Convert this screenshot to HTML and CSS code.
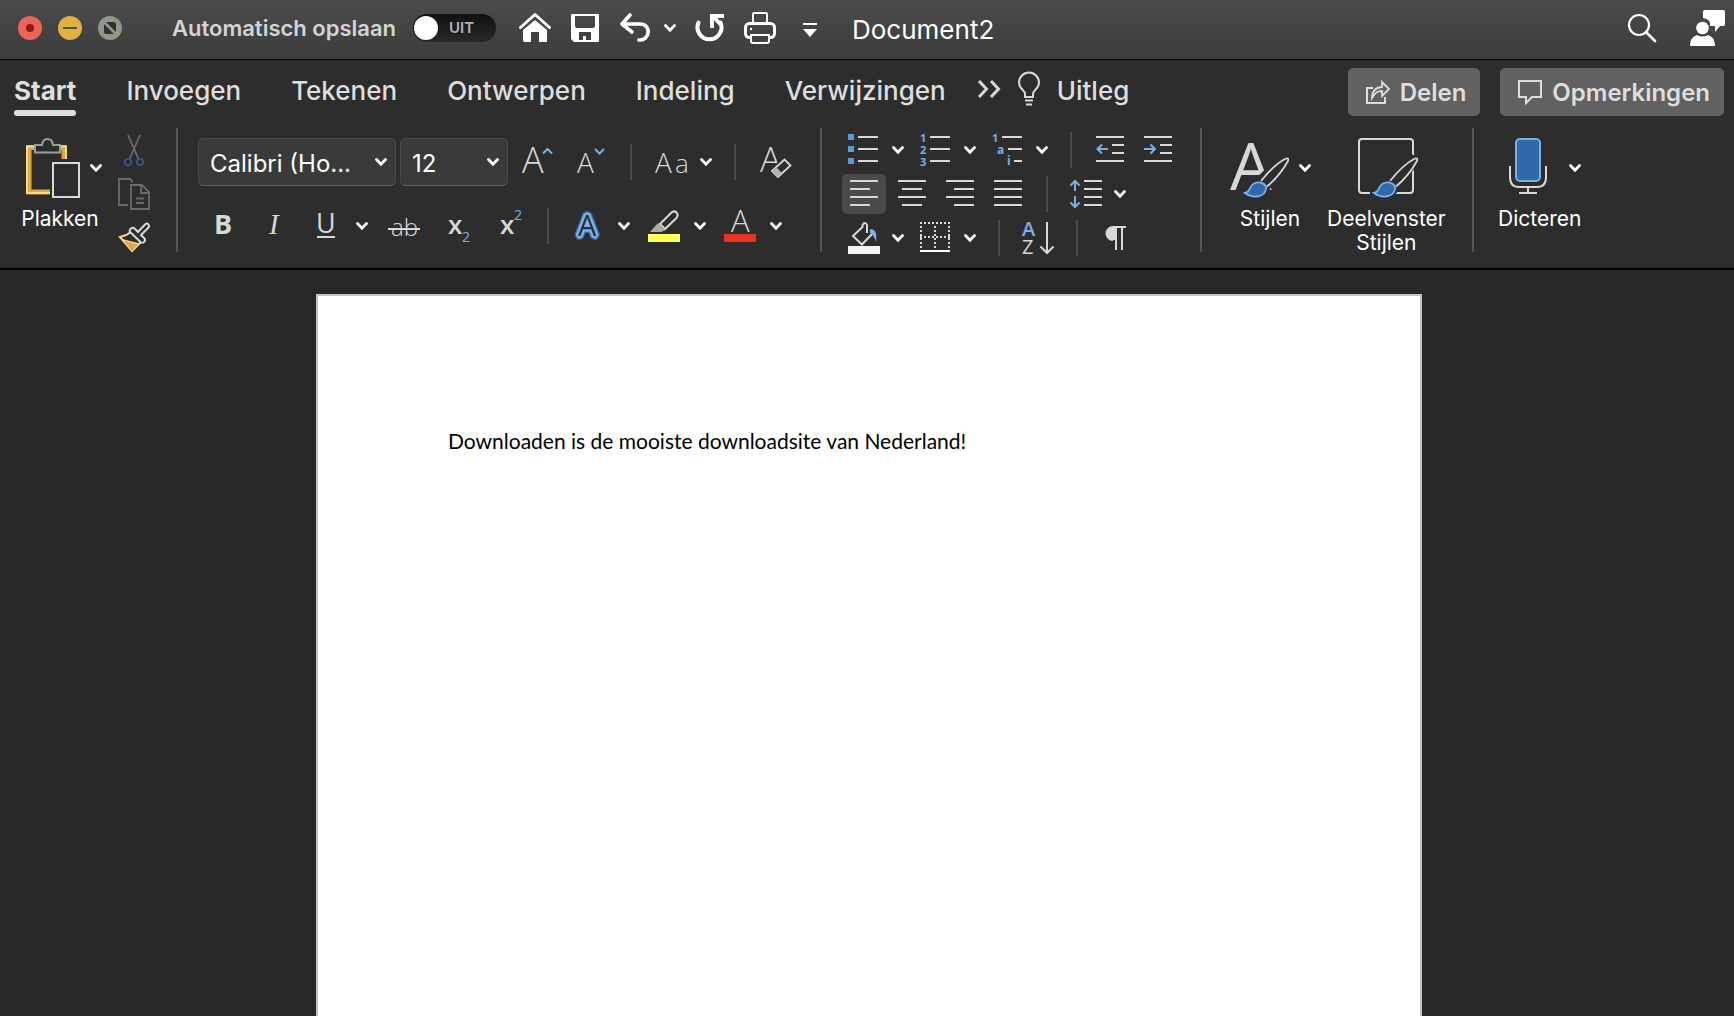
FILE: index.html
```html
<!DOCTYPE html>
<html lang="nl">
<head>
<meta charset="utf-8">
<title>Document2</title>
<meta name="viewport" content="width=device-width, initial-scale=1">
<link rel="stylesheet" href="styles.css">
</head>
<body>
<svg class="defs" aria-hidden="true">
  <symbol id="chev" viewBox="0 0 12 8"><path d="M1.5 1.5 6 6.2 10.5 1.5" fill="none" stroke="currentColor" stroke-width="2.8" stroke-linecap="round"/></symbol>
  <symbol id="brush" viewBox="0 0 60 60">
    <path d="M30 47 58 20" stroke="#2d2d2d" stroke-width="14" fill="none"/>
    <path d="M12 54C20 54 20 42 30 41L42 48C40 58 30 64 12 58Z" fill="#2d2d2d"/>
    <path d="M32 43C40 33 50 24 57 20.5Q60 19.5 59 23C54 32 47 41 38 48.5" fill="none" stroke="#d8d8d8" stroke-width="1.8"/>
    <path d="M16 55C22 54 20 47 26 45C31 43 38 46 37 51C36 59 24 61 16 55Z" fill="#2f69ac" stroke="#7ab0e6" stroke-width="1.8"/>
  </symbol>
</svg>

<header class="titlebar">
  <div class="lights">
    <button class="light light-close" aria-label="Sluiten"><svg viewBox="0 0 24 24"><circle cx="12" cy="12" r="4" fill="#8c1a12"/></svg></button>
    <button class="light light-min" aria-label="Minimaliseren"><svg viewBox="0 0 24 24"><path d="M5 12h14" stroke="#5e5236" stroke-width="2"/></svg></button>
    <button class="light light-max" aria-label="Vergroten"><svg viewBox="0 0 24 24"><path d="M8 6h8q2 0 2 2v8ZM6 8v8q0 2 2 2h8Z" fill="#2f332d"/></svg></button>
  </div>
  <div class="autosave">
    <label for="autosave">Automatisch opslaan</label>
    <span class="switch"><input type="checkbox" id="autosave"><span class="switch-text">UIT</span></span>
  </div>
  <div class="quick">
    <button class="icon" aria-label="Start"><svg viewBox="0 0 32 32"><path d="M1.5 15.5 16 2.5 30.5 15.5" fill="none" stroke="#fff" stroke-width="3" stroke-linecap="round" stroke-linejoin="round"/><path d="M4 18 16 8 28 18V30H20V20H12V30H6Q4 30 4 28Z" fill="#fff"/></svg></button>
    <button class="icon" aria-label="Opslaan"><svg viewBox="0 0 32 32"><path fill-rule="evenodd" d="M3 2H29Q30 2 30 3V29Q30 30 29 30H5L2 27V3Q2 2 3 2ZM6 4V14Q6 16 8 16H24Q26 16 26 14V4ZM10 20V28H14V24H17V28H22V20Z" fill="#fff"/></svg></button>
    <span class="split">
      <button class="icon" aria-label="Ongedaan maken"><svg viewBox="0 0 32 32"><path d="M11 3 3 12 13 20M4 12H21C33 12 31 29 20 28" fill="none" stroke="#fff" stroke-width="3.6" stroke-linecap="round" stroke-linejoin="round"/></svg></button>
      <button class="drop" aria-label="Meer"><svg><use href="#chev"/></svg></button>
    </span>
    <button class="icon" aria-label="Opnieuw"><svg viewBox="0 0 32 32"><path d="M4.5 10.5A12 12 0 1 0 26.5 10.5" fill="none" stroke="#fff" stroke-width="4" stroke-linecap="round"/><path d="M18 16V4H30M19 4 27 13" fill="none" stroke="#fff" stroke-width="4"/></svg></button>
    <button class="icon" aria-label="Afdrukken"><svg viewBox="0 0 32 32"><path d="M9 11V2Q9 1 10 1H22Q23 1 23 2V11" fill="none" stroke="#fff" stroke-width="2"/><rect x="1.5" y="11.5" width="29" height="14" rx="4" fill="none" stroke="#fff" stroke-width="3"/><circle cx="7" cy="17" r="1.2" fill="#fff"/><path d="M7 23H25V29Q25 31 23 31H9Q7 31 7 29Z" fill="#424242" stroke="#fff" stroke-width="2"/></svg></button>
    <button class="icon" aria-label="Werkbalk aanpassen"><svg viewBox="0 0 32 32"><path d="M9 12H23" stroke="#fff" stroke-width="2"/><path d="M9 17H23L16 25Z" fill="#fff"/></svg></button>
  </div>
  <h1 class="doc-title">Document2</h1>
  <div class="title-right">
    <button class="icon" aria-label="Zoeken"><svg viewBox="0 0 32 32"><circle cx="13" cy="13" r="10" fill="none" stroke="#fff" stroke-width="2.2"/><path d="M20 20 29 29" stroke="#fff" stroke-width="2.6" stroke-linecap="round"/></svg></button>
    <button class="icon icon-person" aria-label="Account"><svg viewBox="0 0 36 36"><path d="M15 0H33Q35 0 35 2V14Q35 16 33 16H30L25 22V16H20Q21 9 13 8V2Q13 0 15 0Z" fill="#fff"/><circle cx="12.5" cy="18" r="6.3" fill="#fff"/><path d="M0 36Q0 27 7 25Q12 28 18 25Q25 27 25 36Z" fill="#fff"/></svg></button>
  </div>
</header>

<div class="ribbon">
  <nav class="tabs">
    <div class="tab-list">
      <a class="tab tab-active" href="#start">Start</a>
      <a class="tab" href="#invoegen">Invoegen</a>
      <a class="tab" href="#tekenen">Tekenen</a>
      <a class="tab" href="#ontwerpen">Ontwerpen</a>
      <a class="tab" href="#indeling">Indeling</a>
      <a class="tab" href="#verwijzingen">Verwijzingen</a>
    </div>
    <div class="help">
      <button class="more" aria-label="Meer tabbladen"><svg viewBox="0 0 24 20"><path d="M2 2 9.5 10 2 18M14 2 21.5 10 14 18" fill="none" stroke="#d8d8d8" stroke-width="3"/></svg></button>
      <svg class="bulb" viewBox="0 0 24 34"><path d="M8 25V22C8 18 2 17 2 10.5A10 10 0 0 1 22 10.5C22 17 16 18 16 22V25ZM8 28.5H16M9 32.5H15" fill="none" stroke="#d8d8d8" stroke-width="2"/></svg>
      <a class="tab" href="#uitleg">Uitleg</a>
    </div>
    <div class="share">
      <button class="pill"><svg viewBox="0 0 24 24"><path d="M7 8H1V23H19V17" fill="none" stroke="#dedede" stroke-width="2"/><path d="M6 18C6 11 10 7 16 7V2L23 9 16 16V11C11 11 9 13 6 18Z" fill="none" stroke="#dedede" stroke-width="1.8"/></svg>Delen</button>
      <button class="pill"><svg viewBox="0 0 24 24"><path d="M1 1H23V17H14L8 23V17H1Z" fill="none" stroke="#dedede" stroke-width="2"/></svg>Opmerkingen</button>
    </div>
  </nav>

  <div class="groups">
    <section class="group clipboard">
      <div class="big">
        <div class="big-top">
          <button class="big-icon" aria-labelledby="l-paste"><svg viewBox="-7 0 60 60"><path d="M9 9.5H4V54H25M32 9.5H39V21" fill="none" stroke="#dfa83f" stroke-width="5"/><path d="M9 8.5H2V55H25M33 8.5H41V21" fill="none" stroke="#f7d98c" stroke-width="2"/><path d="M10 14.5V7H17C18 -1 27 -1 28 7H35V14.5Z" fill="#2d2d2d" stroke="#98a195" stroke-width="2"/><rect x="28" y="25" width="26" height="34" fill="#2d2d2d" stroke="#d8d8d8" stroke-width="2"/></svg></button>
          <button class="drop" aria-label="Plakopties"><svg><use href="#chev"/></svg></button>
        </div>
        <span class="big-label" id="l-paste">Plakken</span>
      </div>
      <div class="stack">
        <button class="icon" aria-label="Knippen"><svg viewBox="0 0 32 32"><path d="M10 1 20.5 25M22 1 11.5 25" stroke="#6b6b6b" stroke-width="1.8"/><circle cx="10" cy="28" r="3.2" fill="none" stroke="#35567d" stroke-width="1.8"/><circle cx="22" cy="28" r="3.2" fill="none" stroke="#35567d" stroke-width="1.8"/></svg></button>
        <button class="icon" aria-label="Kopiëren"><svg viewBox="0 0 32 32"><path d="M10 27H1V1H12L15 4M13 7H24L31 14V31H13ZM23 7V15H31M18 20.5H26M18 25H26" fill="none" stroke="#6b6b6b" stroke-width="1.8"/></svg></button>
        <button class="icon" aria-label="Opmaak kopiëren"><svg viewBox="0 0 32 32"><path d="M2 15 14 29 23 20 13 10Q8 14 2 15Z" fill="#2d2d2d" stroke="#f7d98c" stroke-width="2"/><path d="M6 19 20 22 14 29Z" fill="#dfa83f"/><path d="M5 18 21 22" stroke="#f7d98c" stroke-width="1.6"/><path d="M12 10Q11 8 13 6.500Q15 5 16.500 6.500L20 10 27 2.500Q29 .5 30.500 2.500Q32 4.500 29.500 6.500L23 13 26.500 16.500Q28 18 26 20Q24 21.500 22.500 20Z" fill="#2d2d2d" stroke="#d8d8d8" stroke-width="2"/></svg></button>
      </div>
    </section>

    <section class="group font">
      <div class="row row-tall">
        <span class="combo combo-font"><select aria-label="Lettertype"><option>Calibri (Ho...</option></select><svg class="combo-chev"><use href="#chev"/></svg></span>
        <span class="combo combo-size"><select aria-label="Tekengrootte"><option>12</option></select><svg class="combo-chev"><use href="#chev"/></svg></span>
        <div class="cluster cluster-case">
          <button class="icon" aria-label="Groter"><svg viewBox="0 0 32 32"><text class="g" x="0" y="27" font-size="36">A</text><path d="M21 7.5 25.5 3 30 7.5" class="bl"/></svg></button>
          <button class="icon" aria-label="Kleiner"><svg viewBox="0 0 32 32"><text class="g" x="1" y="27" font-size="28">A</text><path d="M19 3 23.5 7.5 28 3" class="bl"/></svg></button>
          <span class="rule"></span>
          <span class="split">
            <button class="icon icon-wide" aria-label="Hoofdlettergebruik"><svg viewBox="0 0 34 32"><text class="g" x="1" y="27" font-size="28">A</text><text class="g" x="21" y="27" font-size="26">a</text></svg></button>
            <button class="drop" aria-label="Meer"><svg><use href="#chev"/></svg></button>
          </span>
          <span class="rule"></span>
          <button class="icon" aria-label="Opmaak wissen"><svg viewBox="0 0 32 32"><text class="g" x="2" y="26" font-size="35">A</text><path d="M13 24.5 26 12 32 18 19 31Z" fill="#2d2d2d" stroke="#2d2d2d" stroke-width="3"/><path d="M14 25 26.5 13.5 32.5 19.5 20 31Z" fill="#2d2d2d" stroke="#d8d8d8" stroke-width="1.8"/><path d="M14 25 18 21 24 27 20 31Z" fill="#b0b0b0"/></svg></button>
        </div>
      </div>
      <div class="row row-style">
        <div class="cluster">
          <button class="icon" aria-label="Vet"><svg viewBox="0 0 32 32"><text class="g gb" x="8" y="24" font-size="27">B</text></svg></button>
          <button class="icon" aria-label="Cursief"><svg viewBox="0 0 32 32"><text class="g gi" x="11" y="24" font-size="29">I</text></svg></button>
          <span class="split split-wide">
            <button class="icon" aria-label="Onderstrepen"><svg viewBox="0 0 32 32"><text class="g gr" x="6" y="23" font-size="27">U</text><path d="M7 27H25" stroke="#d8d8d8" stroke-width="2"/></svg></button>
            <button class="drop" aria-label="Meer"><svg><use href="#chev"/></svg></button>
          </span>
          <button class="icon" aria-label="Doorhalen"><svg viewBox="0 0 32 32"><text class="g" x="3" y="26" font-size="24">ab</text><path d="M0 19H32" stroke="#d8d8d8" stroke-width="2"/></svg></button>
          <button class="icon" aria-label="Subscript"><svg viewBox="0 0 32 32"><text class="g gx" x="8" y="24" font-size="26">x</text><text class="gs" x="22" y="32" font-size="14">2</text></svg></button>
          <button class="icon" aria-label="Superscript"><svg viewBox="0 0 32 32"><text class="g gx" x="8" y="24" font-size="26">x</text><text class="gs" x="22" y="10" font-size="14">2</text></svg></button>
        </div>
        <span class="rule"></span>
        <div class="cluster cluster-tight">
          <span class="split split-wide">
            <button class="icon" aria-label="Teksteffecten"><svg viewBox="0 0 32 32"><text class="fx" x="6" y="26" font-size="29">A</text></svg></button>
            <button class="drop" aria-label="Meer"><svg><use href="#chev"/></svg></button>
          </span>
          <span class="split split-wide">
            <button class="icon" aria-label="Markeren"><svg viewBox="0 0 32 32"><path d="M12 14 23 3Q26 0 28.5 2.5Q31 5 28 8.5L17 19Z" fill="none" stroke="#d8d8d8" stroke-width="2"/><path d="M10 13 18 20 13 22H2Z" fill="#a8ada5"/><rect y="24" width="32" height="8" fill="#ffff54"/></svg></button>
            <button class="drop" aria-label="Meer"><svg><use href="#chev"/></svg></button>
          </span>
          <span class="split split-wide">
            <button class="icon" aria-label="Tekstkleur"><svg viewBox="0 0 32 32"><text class="g" x="7" y="22" font-size="31">A</text><rect y="24" width="32" height="8" fill="#e93323"/></svg></button>
            <button class="drop" aria-label="Meer"><svg><use href="#chev"/></svg></button>
          </span>
        </div>
      </div>
    </section>

    <section class="group para">
      <div class="row">
        <div class="cluster cluster-list">
          <span class="split"><button class="icon" aria-label="Opsommingstekens"><svg viewBox="0 0 32 32"><path d="M0 0H6V6H0ZM0 12H6V18H0ZM0 24H6V30H0Z" fill="#5f9ad8"/><path class="ln" d="M10 3H30M10 15H30M10 27H30"/></svg></button><button class="drop" aria-label="Meer"><svg><use href="#chev"/></svg></button></span>
          <span class="split"><button class="icon" aria-label="Nummering"><svg viewBox="0 0 32 32"><text class="gn" x="0" y="8" font-size="11">1</text><text class="gn" x="0" y="20" font-size="11">2</text><text class="gn" x="0" y="32" font-size="11">3</text><path class="ln" d="M10 3H30M10 15H30M10 27H30"/></svg></button><button class="drop" aria-label="Meer"><svg><use href="#chev"/></svg></button></span>
          <span class="split"><button class="icon" aria-label="Lijst met meerdere niveaus"><svg viewBox="0 0 32 32"><text class="gn" x="0" y="8" font-size="11">1</text><text class="gn" x="5" y="20" font-size="12">a</text><text class="gn" x="15" y="31" font-size="12">i</text><path class="ln" d="M10 3H30M16 15H30M22 27H30"/></svg></button><button class="drop" aria-label="Meer"><svg><use href="#chev"/></svg></button></span>
        </div>
        <span class="rule"></span>
        <div class="cluster cluster-list">
          <button class="icon" aria-label="Inspringing verkleinen"><svg viewBox="0 0 32 32"><path class="ln" d="M2 3H30M18 11H30M18 19H30M2 27H30"/><path class="bl" d="M14 15H4M8 10.5 3.5 15 8 19.5"/></svg></button>
          <button class="icon" aria-label="Inspringing vergroten"><svg viewBox="0 0 32 32"><path class="ln" d="M2 3H30M18 11H30M18 19H30M2 27H30"/><path class="bl" d="M2 15H12M8.5 10.5 13 15 8.5 19.5"/></svg></button>
        </div>
      </div>
      <div class="row row-align">
        <div class="cluster cluster-align">
          <button class="icon icon-on" aria-label="Links uitlijnen"><svg viewBox="0 0 32 32"><path class="ln" d="M2 3H30M2 11H22M2 19H30M2 27H22"/></svg></button>
          <div class="cluster cluster-list">
            <button class="icon" aria-label="Centreren"><svg viewBox="0 0 32 32"><path class="ln" d="M2 3H30M6 11H26M2 19H30M6 27H26"/></svg></button>
            <button class="icon" aria-label="Rechts uitlijnen"><svg viewBox="0 0 32 32"><path class="ln" d="M2 3H30M10 11H30M2 19H30M10 27H30"/></svg></button>
            <button class="icon" aria-label="Uitvullen"><svg viewBox="0 0 32 32"><path class="ln" d="M2 3H30M2 11H30M2 19H30M2 27H30"/></svg></button>
          </div>
        </div>
        <span class="rule"></span>
        <span class="split"><button class="icon" aria-label="Regelafstand"><svg viewBox="0 0 32 32"><path class="ln" d="M14 3H32M14 11H32M14 19H32M14 27H32"/><path class="bl" d="M5 13V3M.5 7.5 5 3 9.5 7.5M5 18V29M.5 24.5 5 29 9.5 24.5"/></svg></button><button class="drop" aria-label="Meer"><svg><use href="#chev"/></svg></button></span>
      </div>
      <div class="row">
        <div class="cluster cluster-list">
          <span class="split"><button class="icon" aria-label="Arcering"><svg viewBox="0 0 32 32"><path d="M19 11V3Q17 -1 14.500 3V5L5 14 14 22.500 25 11" fill="none" stroke="#d8d8d8" stroke-width="2"/><path d="M22 7Q30 7 28 20Q26 13 22 11Z" fill="#7ab0e6"/><rect y="24" width="32" height="8" fill="#f4f4f4"/></svg></button><button class="drop" aria-label="Meer"><svg><use href="#chev"/></svg></button></span>
          <span class="split"><button class="icon" aria-label="Randen"><svg viewBox="0 0 32 32"><path d="M0 1H30M0 15H30M1 4V27M15 4V27M29 4V27" stroke="#d8d8d8" stroke-width="2" stroke-dasharray="2 2"/><path d="M0 29H30" stroke="#fff" stroke-width="2"/></svg></button><button class="drop" aria-label="Meer"><svg><use href="#chev"/></svg></button></span>
        </div>
        <span class="rule"></span>
        <button class="icon" aria-label="Sorteren"><svg viewBox="0 0 32 32"><text class="ga" x="0" y="14" font-size="20">A</text><text class="gz" x="0" y="32" font-size="20">Z</text><path d="M25 0V31M18.5 24.5 25 31 31.5 24.5" fill="none" stroke="#d8d8d8" stroke-width="2"/></svg></button>
        <span class="rule"></span>
        <button class="icon" aria-label="Alinea's weergeven"><svg viewBox="0 0 32 32"><path d="M26 5H13A6.5 6.5 0 0 0 13 18M16 28V5M22 28V5" fill="none" stroke="#d8d8d8" stroke-width="2"/><path d="M16 5H13A6.5 6.5 0 0 0 13 18H16Z" fill="#d8d8d8"/></svg></button>
      </div>
    </section>

    <section class="group styles">
      <div class="big">
        <div class="big-top">
          <button class="big-icon" aria-labelledby="l-styles"><svg viewBox="0 0 60 60"><text class="g gr" x="1" y="52" font-size="66">A</text><use href="#brush"/></svg></button>
          <button class="drop" aria-label="Meer"><svg><use href="#chev"/></svg></button>
        </div>
        <span class="big-label" id="l-styles">Stijlen</span>
      </div>
      <div class="big">
        <div class="big-top">
          <button class="big-icon" aria-labelledby="l-pane"><svg viewBox="-2 0 60 60"><rect x="1" y="1" width="54" height="54" rx="3" fill="none" stroke="#d8d8d8" stroke-width="2"/><use href="#brush" width="60" height="60"/></svg></button>
        </div>
        <span class="big-label" id="l-pane">Deelvenster<br>Stijlen</span>
      </div>
    </section>

    <section class="group voice">
      <div class="big">
        <div class="big-top">
          <button class="big-icon" aria-labelledby="l-dictate"><svg viewBox="0 0 60 60"><rect x="17" y="1" width="24" height="42" rx="4" fill="#2f69ac" stroke="#7ab0e6" stroke-width="2"/><path d="M11 28V39Q11 49 20 49H38Q47 49 47 39V28M29 49V55M20 55H38" fill="none" stroke="#d8d8d8" stroke-width="2"/></svg></button>
          <button class="drop" aria-label="Meer"><svg><use href="#chev"/></svg></button>
        </div>
        <span class="big-label" id="l-dictate">Dicteren</span>
      </div>
    </section>
  </div>
</div>

<main class="workspace">
  <article class="sheet">
    <p>Downloaden is de mooiste downloadsite van Nederland!</p>
  </article>
</main>
</body>
</html>
```
FILE: styles.css
```css
* { box-sizing: border-box; }

body {
  margin: 0;
  height: 100vh;
  display: flex;
  flex-direction: column;
  background: #282828;
  color: #fff;
  font-family: Inter, "Liberation Sans", sans-serif;
  overflow: hidden;
}

button {
  display: block;
  padding: 0;
  border: 0;
  background: none;
  color: inherit;
  font: inherit;
}

svg { display: block; overflow: visible; }
.defs { position: absolute; width: 0; height: 0; }

.icon, .icon svg { width: 32px; height: 32px; flex: none; }
.icon-wide, .icon-wide svg { width: 34px; }
.icon-person, .icon-person svg { width: 36px; height: 36px; }
.drop, .drop svg { width: 12px; height: 8px; flex: none; }

/* Title bar */
.titlebar {
  display: flex;
  align-items: center;
  flex: none;
  height: 60px;
  padding: 0 8px 4px 18px;
  background: linear-gradient(#4b4b4b, #3c3c3c);
  border-bottom: 1px solid #000;
}
.lights { display: flex; gap: 16px; }
.light, .light svg { width: 24px; height: 24px; border-radius: 50%; }
.light-close { background: #ec6559; }
.light-min { background: #e0b043; }
.light-max { background: #8f998a; }

.autosave {
  display: flex;
  align-items: center;
  gap: 17px;
  margin-left: 50px;
  color: #d4d4d4;
  font-size: 22px;
  font-weight: 600;
}
.switch { position: relative; width: 83px; height: 28px; }
.switch input {
  appearance: none;
  display: block;
  width: 83px;
  height: 28px;
  margin: 0;
  border-radius: 14px;
  background: linear-gradient(#111, #282828);
}
.switch input::before {
  content: "";
  display: block;
  width: 24px;
  height: 24px;
  margin: 2px 0 0 1px;
  border-radius: 50%;
  background: #fff;
  position: absolute;
}
.switch-text {
  position: absolute;
  left: 36px;
  top: 4px;
  font-size: 15px;
  line-height: 20px;
  color: #b4b4b4;
  pointer-events: none;
}

.quick { display: flex; align-items: center; gap: 18px; margin-left: 23px; }
.quick .split { gap: 13px; }
.doc-title { margin: 0 0 0 26px; padding-top: 4px; font-size: 26px; font-weight: 400; line-height: 32px; }
.title-right { display: flex; align-items: center; gap: 32px; margin-left: auto; }

/* Ribbon */
.ribbon {
  flex: none;
  background: #2d2d2d;
  border-bottom: 2px solid #000;
}
.tabs {
  display: flex;
  align-items: center;
  gap: 31px;
  height: 64px;
  padding: 0 10px 0 14px;
}
.tab-list { display: flex; gap: 50px; }
.tab {
  padding-bottom: 2px;
  color: #dedede;
  font-size: 26px;
  font-weight: 500;
  line-height: 30px;
  text-decoration: none;
}
.tab-active { font-weight: 700; position: relative; }
.tab-active::after {
  content: "";
  position: absolute;
  left: 0;
  right: 0;
  bottom: -8px;
  height: 6px;
  border-radius: 3px;
  background: #dedede;
}
.help { display: flex; align-items: center; gap: 16px; }
.more { padding-bottom: 6px; }
.more svg { width: 24px; height: 20px; }
.bulb { width: 24px; height: 34px; margin-bottom: 6px; }
.share { display: flex; gap: 20px; margin-left: auto; }
.pill {
  display: flex;
  align-items: center;
  gap: 10px;
  height: 48px;
  padding: 0 14px 0 18px;
  border-radius: 5px;
  background: #616161;
  color: #dedede;
  font-size: 24px;
  font-weight: 600;
}
.pill svg { width: 24px; height: 24px; }

.groups { display: flex; height: 144px; padding-top: 4px; }
.group {
  height: 124px;
  border-right: 2px solid #555;
}
.voice { border-right: 0; }
.row, .cluster, .split { display: flex; align-items: center; }
.cluster { gap: 20px; }
.cluster-tight { gap: 18px; }
.cluster-list { gap: 16px; }
.cluster-align { gap: 10px; }
.split { gap: 12px; }
.split-wide { gap: 14px; }
.rule { width: 2px; height: 36px; background: #4b4b4b; flex: none; }

.big { display: flex; flex-direction: column; align-items: center; }
.big-top { display: flex; align-items: center; gap: 10px; }
.big-icon, .big-icon svg { width: 60px; height: 60px; flex: none; }
.big-label { margin-top: 9px; font-size: 21px; line-height: 24px; text-align: center; }

.clipboard { display: flex; width: 178px; padding: 10px 0 0 18px; gap: 16px; }
.clipboard .big-top { gap: 12px; }
.stack { display: flex; flex-direction: column; gap: 12px; margin-top: -4px; }

.font { width: 644px; padding: 10px 0 0 20px; }
.row-tall { height: 48px; }
.combo { position: relative; }
.combo select {
  appearance: none;
  display: block;
  width: 100%;
  height: 48px;
  padding: 3px 11px 0;
  border: 1px solid #484848;
  border-bottom-color: #606060;
  border-radius: 5px;
  background: #3a3a3a;
  color: #fff;
  font: 400 24px/32px Inter, "Liberation Sans", sans-serif;
}
.combo-font { width: 198px; }
.combo-size { width: 108px; margin-left: 4px; }
.combo-chev { position: absolute; right: 9px; top: 20px; width: 12px; height: 8px; }
.cluster-case { gap: 22px; margin-left: 14px; }
.row-style { gap: 23px; height: 36px; margin-top: 22px; padding-left: 8px; }

.para { width: 380px; padding: 4px 0 0 26px; }
.para .row { height: 36px; gap: 22px; }
.para .row-align { height: 40px; margin: 6px 0 6px -6px; }
.icon-on { width: 44px; height: 40px; padding: 4px 6px; border-radius: 5px; background: #4a4a4a; }

.styles { display: flex; width: 272px; padding: 10px 0 0 27px; gap: 16px; }
.voice { padding: 10px 0 0 24px; }

/* Letter glyphs inside the tool icons */
.g { fill: #d8d8d8; font-family: "Open Sans", "Noto Sans", sans-serif; font-weight: 300; }
.gr { font-weight: 400; }
.gb { font-weight: 700; }
.gx { font-weight: 600; }
.gi { font-family: "Liberation Serif", serif; font-style: italic; font-weight: 400; }
.gs { fill: #7ab0e6; font-family: "Open Sans", sans-serif; }
.gn { fill: #7ab0e6; font-family: "Open Sans", sans-serif; font-weight: 700; }
.ga { fill: #7ab0e6; font-family: "Open Sans", sans-serif; font-weight: 600; }
.gz { fill: #d8d8d8; font-family: "Open Sans", sans-serif; }
.fx {
  fill: #2d2d2d;
  stroke: #7ab0e6;
  stroke-width: 5px;
  stroke-linejoin: bevel;
  paint-order: stroke;
  font-family: "Open Sans", sans-serif;
  font-weight: 400;
  filter: drop-shadow(1px 0 0 #2f69ac) drop-shadow(-1px 0 0 #2f69ac) drop-shadow(0 1px 0 #2f69ac) drop-shadow(0 -1px 0 #2f69ac);
}
.ln { fill: none; stroke: #d8d8d8; stroke-width: 2px; }
.bl { fill: none; stroke: #7ab0e6; stroke-width: 2px; }

/* Document */
.workspace {
  flex: 1;
  min-height: 0;
  overflow: hidden;
  display: flex;
  justify-content: center;
  padding: 24px 0 0 4px;
  background: #282828;
}
.sheet {
  width: 1106px;
  min-height: 1430px;
  padding: 132px 130px;
  border: 2px solid #c4c4c4;
  background: #fff;
  color: #000;
}
.sheet p {
  margin: 0;
  font-family: Lato, "Open Sans", sans-serif;
  font-size: 21px;
  line-height: 26px;
}
```
